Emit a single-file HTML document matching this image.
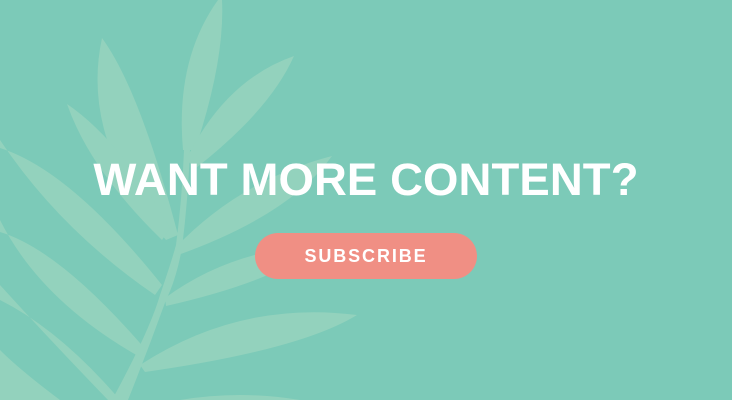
<!DOCTYPE html>
<html><head><style>
html,body{margin:0;padding:0}
body{width:732px;height:400px;overflow:hidden;background:#7ccab8;position:relative;font-family:"Liberation Sans",Arial,sans-serif}
svg{position:absolute;left:0;top:0}
h1{position:absolute;left:0;width:732px;top:152px;margin:0;text-align:center;color:#fff;font-size:45.5px;font-weight:bold;letter-spacing:0.1px;line-height:56px}
.btn{position:absolute;left:255px;top:233px;width:222px;height:46px;border-radius:23px;background:#f08f84;color:#fff;font-weight:bold;font-size:18px;letter-spacing:1.9px;text-align:center;line-height:46px}
</style></head><body>
<svg width="732" height="400" viewBox="0 0 732 400">
<g fill="#93d2bd">
<path d="M112,400 Q150,330 160,295 Q172,260 176,245 Q182,200 184,150 L190,150 Q188,200 182,248 Q176,280 166,300 Q148,350 128,400 Z"/>
<path d="M183,150 Q175,60 218,0 L222,0 Q225,60 195,150 Z"/>
<path d="M166,240 Q80,140 102,38 Q140,90 178,235 Z"/>
<path d="M186,160 Q225,80 294,56 Q270,110 196,168 Z"/>
<path d="M162,240 Q90,170 67,104 Q120,140 170,228 Z"/>
<path d="M175,248 Q240,180 332,156 Q290,215 178,255 Z"/>
<path d="M155,295 Q60,230 0,140 L0,148 Q70,170 162,285 Z"/>
<path d="M165,298 Q230,250 318,245 Q280,280 166,306 Z"/>
<path d="M138,356 Q40,300 0,220 L0,232 Q60,250 146,350 Z"/>
<path d="M140,365 Q240,300 357,315 Q300,350 145,372 Z"/>
<path d="M108,400 Q50,340 0,285 L0,300 Q60,330 120,400 Z"/>
<path d="M60,400 Q20,370 0,350 L0,400 Z"/>
<path d="M180,400 Q240,390 300,400 Z"/>
</g>
</svg>
<h1>WANT MORE CONTENT?</h1>
<div class="btn">SUBSCRIBE</div>
</body></html>
